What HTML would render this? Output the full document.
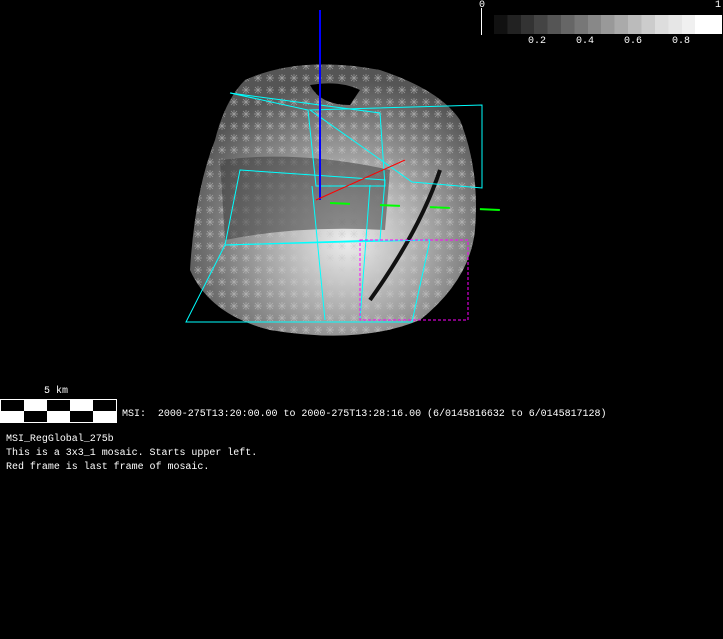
<html><body style="margin:0;background:#000;width:723px;height:639px;overflow:hidden;position:relative;font-family:'Liberation Mono',monospace;color:#fff">
<svg width="723" height="639" style="position:absolute;left:0;top:0">
<defs>
<radialGradient id="g" cx="0.55" cy="0.65" r="0.6">
<stop offset="0" stop-color="#eee"/><stop offset="0.45" stop-color="#aaa"/><stop offset="1" stop-color="#555"/>
</radialGradient>
<pattern id="p" width="12" height="12" patternUnits="userSpaceOnUse"><path d="M2 6h8M6 2v8M3 3l6 6M9 3l-6 6" stroke="#ccc" stroke-width="0.7" opacity="0.6"/></pattern>
</defs>
<path d="M245 80 Q300 55 380 70 Q440 90 460 120 Q480 170 475 230 Q470 280 420 320 Q360 345 270 330 Q210 315 190 270 Q195 190 215 140 Q225 100 245 80Z" fill="url(#g)"/>
<path d="M245 80 Q300 55 380 70 Q440 90 460 120 Q480 170 475 230 Q470 280 420 320 Q360 345 270 330 Q210 315 190 270 Q195 190 215 140 Q225 100 245 80Z" fill="url(#p)"/>
<path d="M220 160 Q300 150 390 170 L385 230 Q300 225 225 240Z" fill="#333" opacity="0.5"/>
<path d="M310 85 Q340 80 360 90 L350 105 Q320 105 310 85Z" fill="#000"/>
<path d="M440 170 Q420 230 370 300" stroke="#111" stroke-width="4" fill="none"/>
<g stroke="#0ff" stroke-width="1" fill="none">
<path d="M230 93 L380 113 L385 186 L316 186 L308 110Z"/>
<path d="M310 110 L482 105 L482 188 L412 182Z"/>
<path d="M240 170 L385 180 L380 240 L225 245Z"/>
<path d="M225 245 L186 322 L412 322 L430 240Z"/>
<path d="M312 186 L325 320 M370 185 L360 320"/>
</g>
<path d="M360 240 L468 240 L468 320 L360 320Z" stroke="#f0f" stroke-dasharray="3,2" fill="none"/>
<path d="M320 10 V200" stroke="#00f" stroke-width="2"/>
<path d="M316 200 L405 160" stroke="#f00"/>
<path d="M330 203 L500 210" stroke="#0f0" stroke-width="2" stroke-dasharray="20,30"/>
</svg>
<div style="position:absolute;top:8px;left:481px;width:1px;height:27px;background:#fff"></div>
<div style="position:absolute;left:479px;top:0;font-size:10px">0</div>
<div style="position:absolute;left:715px;top:0;font-size:10px">1</div>
<div style="position:absolute;left:494px;top:15px;width:228px;height:19px;background:linear-gradient(90deg,#111 0,#111 5.9%,#222 5.9%,#222 11.8%,#333 11.8%,#333 17.6%,#444 17.6%,#444 23.5%,#555 23.5%,#555 29.4%,#666 29.4%,#666 35.3%,#777 35.3%,#777 41.2%,#888 41.2%,#888 47%,#999 47%,#999 52.9%,#aaa 52.9%,#aaa 58.8%,#bbb 58.8%,#bbb 64.7%,#ccc 64.7%,#ccc 70.6%,#ddd 70.6%,#ddd 76.5%,#e6e6e6 76.5%,#e6e6e6 82.4%,#f0f0f0 82.4%,#f0f0f0 88.2%,#fff 88.2%)"></div>
<div style="position:absolute;top:36px;left:528px;font-size:10px">0.2</div>
<div style="position:absolute;top:36px;left:576px;font-size:10px">0.4</div>
<div style="position:absolute;top:36px;left:624px;font-size:10px">0.6</div>
<div style="position:absolute;top:36px;left:672px;font-size:10px">0.8</div>
<div style="position:absolute;left:44px;top:386px;font-size:10px">5 km</div>
<div style="position:absolute;left:0;top:399px;height:22px;border:1px solid #fff;background:
linear-gradient(90deg,#000 20%,#fff 20%,#fff 40%,#000 40%,#000 60%,#fff 60%,#fff 80%,#000 80%) top/100% 50% no-repeat,
linear-gradient(90deg,#fff 20%,#000 20%,#000 40%,#fff 40%,#fff 60%,#000 60%,#000 80%,#fff 80%) bottom/100% 50% no-repeat;width:115px"></div>
<div style="position:absolute;left:122px;top:409px;font-size:10px;letter-spacing:-0.02px;white-space:pre">MSI:  2000-275T13:20:00.00 to 2000-275T13:28:16.00 (6/0145816632 to 6/0145817128)</div>
<div style="position:absolute;left:6px;top:433px;font-size:10px;letter-spacing:-0.02px;line-height:14px;white-space:pre">MSI_RegGlobal_275b
This is a 3x3_1 mosaic. Starts upper left.
Red frame is last frame of mosaic.</div>
</body></html>
